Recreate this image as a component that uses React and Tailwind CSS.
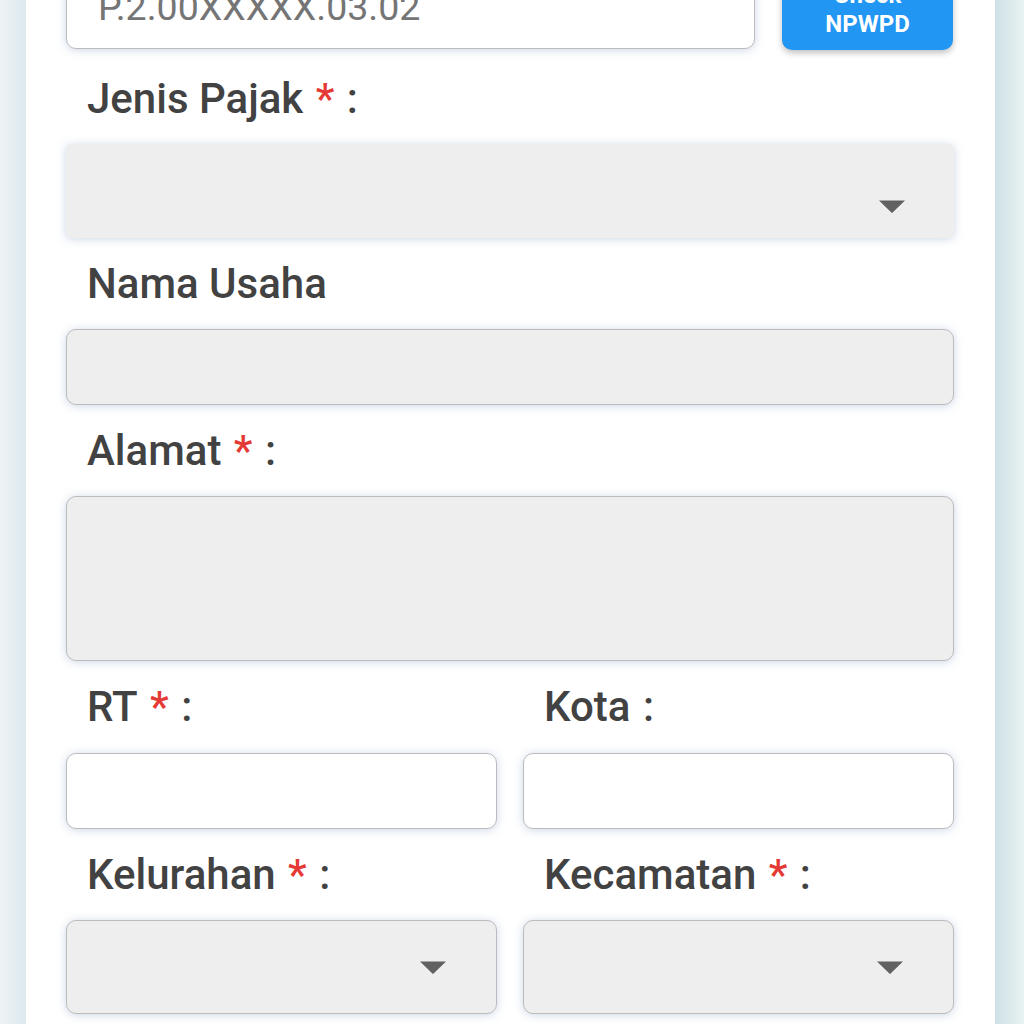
import React from 'react';

const Arrow = () => (
  <svg width="26" height="13" viewBox="0 0 26 13">
    <path d="M0 0.5 H26 L13.6 12.6 Q13 13.2 12.4 12.6 Z" fill="#616161" />
  </svg>
);

const Label = ({ text, required, colon = true, className = '' }) => (
  <div className={`pl-[21px] h-[49px] leading-[49px] text-[42px] font-medium text-[#424242] whitespace-nowrap ${className}`}>
    {text}
    {required && <span className="ml-[2px] text-[#e53935]"> *</span>}
    {colon && <span className="ml-[2px]"> :</span>}
  </div>
);

const glow = 'shadow-[0_1px_10px_rgba(110,140,185,0.35)]';

const App = () => {
  return (
    <div className="flex h-[1024px] w-full overflow-hidden bg-white" style={{ fontFamily: 'Roboto, "Noto Sans", sans-serif' }}>
      {/* left gutter */}
      <div className="w-[26px] shrink-0 bg-gradient-to-r from-[#eef4f6] to-[#dde8ed]" />

      {/* form card */}
      <div className="flex-1 bg-white pl-[40px] pr-[41px]">
        {/* NPWPD row */}
        <div className="-mt-[41px] flex items-start gap-[27px]">
          <div className={`flex h-[90px] w-[689px] items-end rounded-[10px] border border-[#bcbcbc] bg-white pb-[23px] pl-[31px] ${glow}`}>
            <span className="text-[37.5px] leading-[36px] text-[#757575]">P.2.00XXXXX.03.02</span>
          </div>
          <button className="mt-[7px] flex h-[84px] w-[171px] flex-col items-center justify-center rounded-[10px] bg-[#2196f3] pt-[4px] text-[24px] font-bold leading-[29px] text-white shadow-[0_3px_6px_rgba(0,0,0,0.25)]">
            <span>Check</span>
            <span>NPWPD</span>
          </button>
        </div>

        {/* Jenis Pajak */}
        <Label text="Jenis Pajak" required className="mt-[24px]" />
        <div className={`mt-[21px] flex h-[94px] items-center justify-end rounded-[6px] bg-[#eeeeee] pr-[49px] pt-[31px] ${glow}`}>
          <Arrow />
        </div>

        {/* Nama Usaha */}
        <Label text="Nama Usaha" colon={false} className="mt-[21px]" />
        <div className={`mt-[21px] h-[76px] rounded-[10px] border border-[#bcbcbc] bg-[#eeeeee] ${glow}`} />

        {/* Alamat */}
        <Label text="Alamat" required className="mt-[21px]" />
        <div className={`mt-[21px] h-[165px] rounded-[10px] border border-[#bcbcbc] bg-[#eeeeee] ${glow}`} />

        {/* RT / Kota */}
        <div className="mt-[21px] grid grid-cols-2 gap-x-[26px]">
          <div>
            <Label text="RT" required />
            <div className={`mt-[22px] h-[76px] rounded-[10px] border border-[#bcbcbc] bg-white ${glow}`} />
          </div>
          <div>
            <Label text="Kota" />
            <div className={`mt-[22px] h-[76px] rounded-[10px] border border-[#bcbcbc] bg-white ${glow}`} />
          </div>
        </div>

        {/* Kelurahan / Kecamatan */}
        <div className="mt-[21px] grid grid-cols-2 gap-x-[26px]">
          <div>
            <Label text="Kelurahan" required />
            <div className={`mt-[21px] flex h-[94px] items-center justify-end rounded-[10px] border border-[#bcbcbc] bg-[#eeeeee] pr-[50px] ${glow}`}>
              <Arrow />
            </div>
          </div>
          <div>
            <Label text="Kecamatan" required />
            <div className={`mt-[21px] flex h-[94px] items-center justify-end rounded-[10px] border border-[#bcbcbc] bg-[#eeeeee] pr-[50px] ${glow}`}>
              <Arrow />
            </div>
          </div>
        </div>
      </div>

      {/* right gutter */}
      <div className="w-[29px] shrink-0 bg-gradient-to-r from-[#cde1e6] to-[#eaf2f3]" />
    </div>
  );
};

export default App;
